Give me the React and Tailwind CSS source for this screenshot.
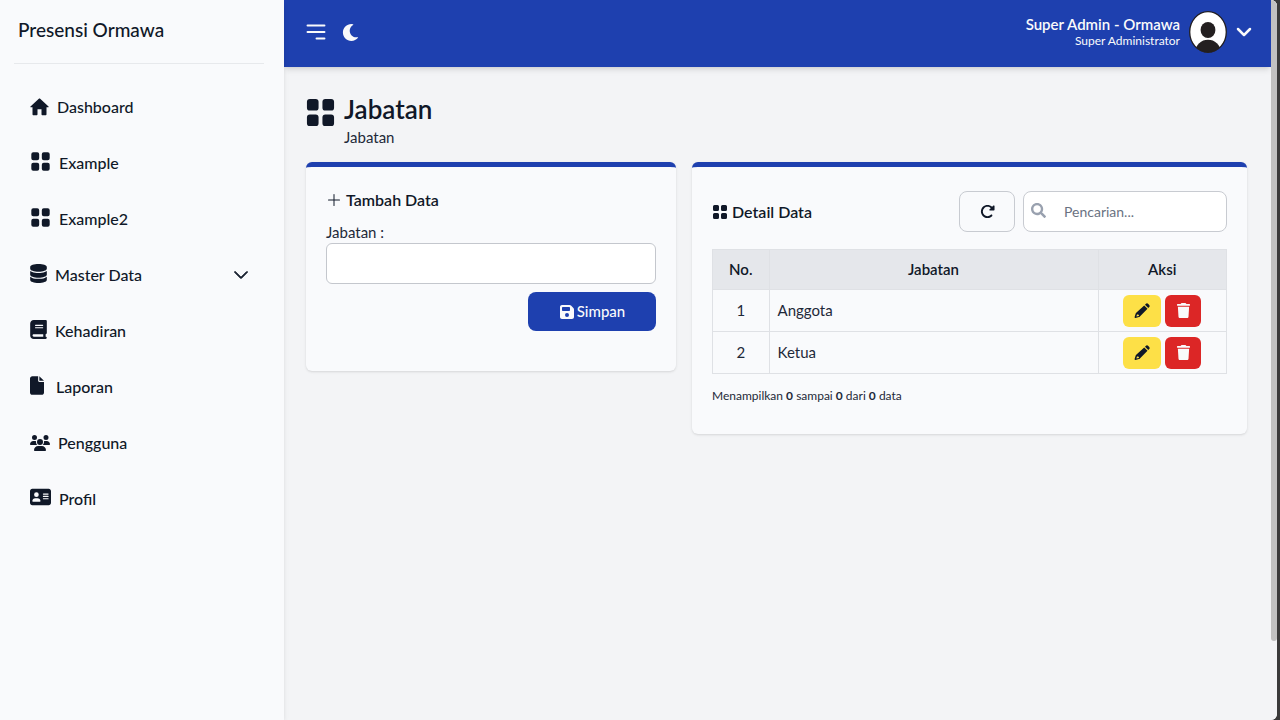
import React, { useState } from "react";
import { BsGridFill, BsPlusLg, BsChevronDown } from "react-icons/bs";
import { FaMoon, FaSearch } from "react-icons/fa";
import {
  FaUsers,
  FaBook,
  FaDatabase,
  FaFile,
  FaAddressCard,
  FaFloppyDisk,
  FaRotateRight,
  FaTrash,
} from "react-icons/fa6";

function HomeIcon({ className }) {
  return (
    <svg viewBox="2.5 3 19 17.5" fill="currentColor" className={className} aria-hidden="true">
      <path d="M10 19v-5h4v5c0 .55.45 1 1 1h3c.55 0 1-.45 1-1v-7h1.7c.46 0 .68-.57.33-.87L12.67 3.6c-.38-.34-.96-.34-1.34 0l-8.36 7.53c-.34.3-.13.87.33.87H5v7c0 .55.45 1 1 1h3c.55 0 1-.45 1-1z" />
    </svg>
  );
}

function MenuIcon() {
  return (
    <svg viewBox="0 0 20 18" className="h-[18px] w-5" fill="none" stroke="currentColor" strokeWidth="1.9" strokeLinecap="round" aria-hidden="true">
      <path d="M1.5 2.5h17M1.5 9h17M10.5 15.5h8" />
    </svg>
  );
}

function PencilIcon() {
  return (
    <svg viewBox="0 0 16 16" className="h-4 w-4" fill="currentColor" aria-hidden="true">
      <path d="M11 1.7l.7-.7a1.8 1.8 0 0 1 2.6 0l.7.7a1.8 1.8 0 0 1 0 2.6l-.7.7z" />
      <path fillRule="evenodd" d="M10.2 2.5l3.3 3.3-7.6 7.6c-.3.3-.6.5-1 .6l-3.4 1a.8.8 0 0 1-.9-.9l1-3.4c.1-.4.3-.7.6-1zM3.1 11.1l-.7 2.5 2.5-.7v-1.1H3.6z" />
    </svg>
  );
}

const menu = [
  { label: "Dashboard", Icon: HomeIcon, size: "w-[19px] h-[18px]" },
  { label: "Example", Icon: BsGridFill, size: "w-[21px] h-[21px] mb-1" },
  { label: "Example2", Icon: BsGridFill, size: "w-[21px] h-[21px] mb-1" },
  { label: "Master Data", Icon: FaDatabase, size: "w-[17px] h-[19px] mb-1", children: true },
  { label: "Kehadiran", Icon: FaBook, size: "w-[17px] h-[19px] mb-1" },
  { label: "Laporan", Icon: FaFile, size: "w-[18px] h-[19px] pr-1 mb-1" },
  { label: "Pengguna", Icon: FaUsers, size: "w-[20px] h-[20px]" },
  { label: "Profil", Icon: FaAddressCard, size: "w-[21px] h-[20px] mb-1" },
];

function Sidebar() {
  return (
    <aside className="z-10 w-[284px] shrink-0 bg-[#f9fafc] px-[14px] shadow-md">
      <div className="flex h-[63px] items-center pb-[2px] pl-1 text-[19px] font-medium">Presensi Ormawa</div>
      <hr className="mr-[6px] border-[#e7e9ec]" />
      <nav className="pt-[15px]" aria-label="Menu utama">
        <ul>
          {menu.map(({ label, Icon, size, children }) => (
            <li key={label}>
              <a href="#" className="flex h-14 items-center gap-2 px-4 text-[16px] font-medium">
                <Icon className={`shrink-0 ${size}`} />
                <span>{label}</span>
                {children && <BsChevronDown className="mr-[5px] ml-auto h-4 w-4 stroke-1 stroke-current" />}
              </a>
            </li>
          ))}
        </ul>
      </nav>
    </aside>
  );
}

function Avatar() {
  return (
    <svg viewBox="0 0 38 42" className="h-[42px] w-[38px]" aria-hidden="true">
      <defs>
        <clipPath id="face">
          <ellipse cx="19" cy="21" rx="18.5" ry="20.5" />
        </clipPath>
      </defs>
      <ellipse cx="19" cy="21" rx="18.2" ry="20.2" fill="#fff" />
      <g clipPath="url(#face)" fill="#231f20">
        <ellipse cx="19" cy="19" rx="7.4" ry="8" />
        <ellipse cx="19" cy="40.5" rx="12.5" ry="11.8" />
      </g>
      <ellipse cx="19" cy="21" rx="18.3" ry="20.3" fill="none" stroke="#231f20" strokeWidth="1.3" />
    </svg>
  );
}

function Header() {
  return (
    <header className="flex h-[67px] items-center justify-between bg-[#1e40af] pr-[19px] pb-[3px] pl-[22px] text-[#f9fafb] shadow-md">
      <div className="flex items-center gap-4">
        <button type="button" aria-label="Buka tutup menu">
          <MenuIcon />
        </button>
        <button type="button" aria-label="Mode gelap">
          <FaMoon className="h-[17px] w-[17px]" />
        </button>
      </div>
      <button type="button" className="flex items-center gap-[9px]">
        <span className="flex flex-col text-right">
          <span className="text-[15px] leading-[17px] font-semibold">Super Admin - Ormawa</span>
          <span className="text-[12px] leading-[15px]">Super Administrator</span>
        </span>
        <Avatar />
        <BsChevronDown className="h-4 w-4 stroke-[1.5] stroke-current" />
      </button>
    </header>
  );
}

function Card({ children }) {
  return (
    <section className="rounded-md border-t-[5px] border-[#1e40af] bg-[#f9fafc] px-5 shadow-sm">
      {children}
    </section>
  );
}

function AddCard() {
  return (
    <Card>
      <form className="flex flex-col pt-[23px] pb-10" onSubmit={(e) => e.preventDefault()}>
        <h2 className="flex h-5 items-center gap-1 text-[16px] font-semibold">
          <BsPlusLg className="h-4 w-4" />
          Tambah Data
        </h2>
        <label htmlFor="jabatan" className="mt-3 mb-px text-[15px] leading-5 text-gray-800">
          Jabatan :
        </label>
        <input id="jabatan" type="text" className="h-[41px] w-full rounded-md border border-[#c4c7cd] bg-white px-3 text-[15px]" />
        <button type="submit" className="mt-2 flex h-[39px] w-32 items-center justify-center gap-[2px] self-end rounded-lg bg-[#1e40af] text-[15px] font-medium text-[#f9fafb]">
          <FaFloppyDisk className="h-4 w-4" />
          Simpan
        </button>
      </form>
    </Card>
  );
}

const rows = ["Anggota", "Ketua"];

function DetailCard() {
  const [query, setQuery] = useState("");
  const cell = "border border-[#dfe1e5]";
  return (
    <Card>
      <div className="pt-6 pb-[28px]">
        <div className="flex items-center gap-2">
          <h2 className="mr-auto flex items-center gap-1 text-[16px] font-semibold">
            <BsGridFill className="h-4 w-4" />
            Detail Data
          </h2>
          <button type="button" aria-label="Muat ulang" className="flex h-[41px] w-14 items-center justify-center rounded-lg border border-[#c8cbd1]">
            <FaRotateRight className="h-[15px] w-[15px]" />
          </button>
          <div className="relative w-[204px]">
            <FaSearch className="absolute top-3 left-2 h-[15px] w-[15px] text-gray-400" />
            <input
              type="search"
              aria-label="Pencarian"
              placeholder="Pencarian..."
              value={query}
              onChange={(e) => setQuery(e.target.value)}
              className="h-[41px] w-full rounded-lg border border-[#c8cbd1] bg-white pr-3 pl-10 text-[14px] placeholder:text-gray-500"
            />
          </div>
        </div>
        <table className="mt-[17px] w-full border-collapse text-[15px]">
          <thead className="bg-gray-200">
            <tr className="h-10">
              <th className={`w-[11%] font-semibold ${cell}`}>No.</th>
              <th className={`font-semibold ${cell}`}>Jabatan</th>
              <th className={`w-[25%] font-semibold ${cell}`}>Aksi</th>
            </tr>
          </thead>
          <tbody className="text-gray-800">
            {rows.map((name, i) => (
              <tr key={name} className="h-[42px]">
                <td className={`text-center ${cell}`}>{i + 1}</td>
                <td className={`px-2 ${cell}`}>{name}</td>
                <td className={cell}>
                  <div className="flex items-center justify-center gap-1">
                    <button type="button" aria-label={`Ubah ${name}`} className="flex h-8 w-[38px] items-center justify-center rounded-md bg-[#fde047] text-gray-900">
                      <PencilIcon />
                    </button>
                    <button type="button" aria-label={`Hapus ${name}`} className="flex h-8 w-9 items-center justify-center rounded-md bg-[#dc2626] text-[#f9fafb]">
                      <FaTrash className="h-[15px] w-[15px]" />
                    </button>
                  </div>
                </td>
              </tr>
            ))}
          </tbody>
        </table>
        <p className="mt-3 text-[12px] leading-5 text-gray-800">
          Menampilkan <b>0</b> sampai <b>0</b> dari <b>0</b> data
        </p>
      </div>
    </Card>
  );
}

export default function App() {
  return (
    <div className="flex min-h-screen bg-[#3a3a3a] font-['Lato',sans-serif] text-gray-900">
      <div className="flex min-w-0 grow overflow-hidden rounded-r-md bg-[#f3f4f6]">
        <Sidebar />
        <div className="min-w-0 grow">
          <Header />
          <main className="pt-[27px] pr-6 pb-6 pl-[22px]">
            <div className="flex gap-2">
              <BsGridFill className="mt-[3px] -ml-px h-[31px] w-[31px]" />
              <div>
                <h1 className="text-[26px] leading-[31px] font-semibold">Jabatan</h1>
                <p className="mt-[2px] text-[15px] leading-5 text-gray-800">Jabatan</p>
              </div>
            </div>
            <div className="mt-[15px] grid grid-cols-[2fr_3fr] items-start gap-4">
              <AddCard />
              <DetailCard />
            </div>
          </main>
        </div>
        <div className="w-[6px] shrink-0 bg-[#f3f4f6]">
          <div className="h-[89vh] rounded-b-full bg-[#c1c1c1]" />
        </div>
      </div>
      <div className="w-[3px] shrink-0" />
    </div>
  );
}
